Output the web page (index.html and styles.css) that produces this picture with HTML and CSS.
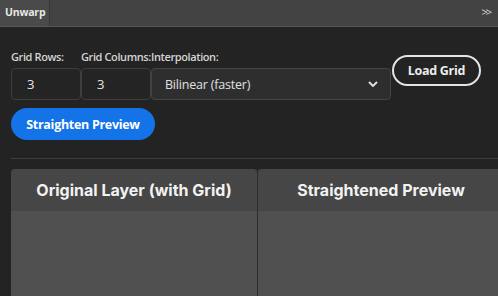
FILE: index.html
```html
<html>
<head>
  <title>Unwarp</title>
  <link rel="stylesheet" href="styles.css">
</head>
<body>
  <div class="tabbar">
    <div class="tab">Unwarp</div>
    <div class="more">&gt;&gt;</div>
  </div>

  <div class="panel">
    <div class="controls">
      <div class="fields">
        <div class="field">
          <label for="rows">Grid Rows:</label>
          <input id="rows" class="num" type="text" value="3">
        </div>
        <div class="field">
          <label for="cols">Grid Columns:</label>
          <input id="cols" class="num" type="text" value="3">
        </div>
        <div class="field">
          <label for="interp">Interpolation:</label>
          <div class="select" id="interp">
            <span>Bilinear (faster)</span>
            <svg width="12" height="8" viewBox="0 0 12 8"><path d="M2 2 L6 6 L10 2" fill="none" stroke="#e6e6e6" stroke-width="1.8"/></svg>
          </div>
        </div>
      </div>
      <button class="btn-outline">Load Grid</button>
    </div>

    <button class="btn-primary">Straighten Preview</button>

    <hr class="sep">

    <div class="cards">
      <div class="card">
        <div class="card-head">Original Layer (with Grid)</div>
        <div class="card-body"></div>
      </div>
      <div class="card">
        <div class="card-head">Straightened Preview</div>
        <div class="card-body"></div>
      </div>
    </div>
  </div>
</body>
</html>
```

FILE: styles.css
```css
body {
  margin: 0;
  background: #232323;
  font-family: 'Open Sans', sans-serif;
  color: #e0e0e0;
  overflow: hidden;
  width: 498px;
  height: 296px;
}
.tabbar {
  display: flex;
  justify-content: space-between;
  align-items: stretch;
  height: 26px;
  background: #434343;
  border-bottom: 1px solid #575757;
}
.tab {
  width: 50px;
  box-sizing: border-box;
  padding-left: 5px;
  background: #4a4a4a;
  border-right: 1px solid #383838;
  font-size: 10.5px;
  font-weight: bold;
  color: #e8e8e8;
  line-height: 25px;
  letter-spacing: -0.2px;
}
.more {
  font-size: 11px;
  color: #d8d8d8;
  padding-right: 8px;
  line-height: 24px;
  letter-spacing: -2px;
}
.panel {
  padding: 0 0 0 11px;
  width: 494px;
}
.controls {
  display: flex;
  align-items: flex-start;
  margin-top: 23px;
}
.fields {
  display: flex;
}
.field {
  display: flex;
  flex-direction: column;
}
.field label {
  font-size: 11px;
  font-weight: 600;
  color: #d4d4d4;
  height: 18px;
  line-height: 14px;
  letter-spacing: -0.4px;
  white-space: nowrap;
}
.num {
  width: 70px;
  height: 32px;
  box-sizing: border-box;
  margin: 0;
  padding: 0 0 0 15px;
  background: #242424;
  border: 1px solid #3e3e3e;
  border-radius: 4px;
  color: #e4e4e4;
  font-family: 'Open Sans', sans-serif;
  font-size: 13px;
  outline: none;
}
.select {
  width: 240px;
  height: 32px;
  box-sizing: border-box;
  display: flex;
  align-items: center;
  justify-content: space-between;
  padding: 0 11px 0 13px;
  background: #2e2e2e;
  border: 1px solid #444;
  border-radius: 4px;
  font-size: 12.5px;
  letter-spacing: -0.2px;
  color: #e0e0e0;
}
.btn-outline {
  margin: 5px 0 0 1px;
  width: 89px;
  height: 31px;
  box-sizing: border-box;
  background: transparent;
  border: 2px solid #e4e4e4;
  border-radius: 16px;
  color: #ededed;
  font-family: 'Open Sans', sans-serif;
  font-size: 12.5px;
  font-weight: bold;
  letter-spacing: -0.3px;
  padding: 0;
}
.btn-primary {
  display: block;
  margin-top: 8px;
  width: 144px;
  height: 32px;
  background: #1473e6;
  border: none;
  border-radius: 16px;
  color: #fff;
  font-family: 'Open Sans', sans-serif;
  font-size: 12.5px;
  font-weight: bold;
  letter-spacing: -0.3px;
  padding: 0;
}
.sep {
  border: none;
  border-top: 1px solid #3c3c3c;
  margin: 18px 0 0 0;
}
.cards {
  display: grid;
  grid-template-columns: 246px 246px;
  gap: 1px;
  margin-top: 10px;
  background: #2c2c2c;
  border-radius: 4px 4px 0 0;
}
.card {
  border-radius: 4px 4px 0 0;
  overflow: hidden;
}
.card-head {
  height: 42px;
  background: #464646;
  font-family: Inter, sans-serif;
  font-weight: bold;
  font-size: 16px;
  color: #f2f2f2;
  text-align: center;
  line-height: 42px;
}
.card-body {
  height: 90px;
  background: #505050;
}
```
